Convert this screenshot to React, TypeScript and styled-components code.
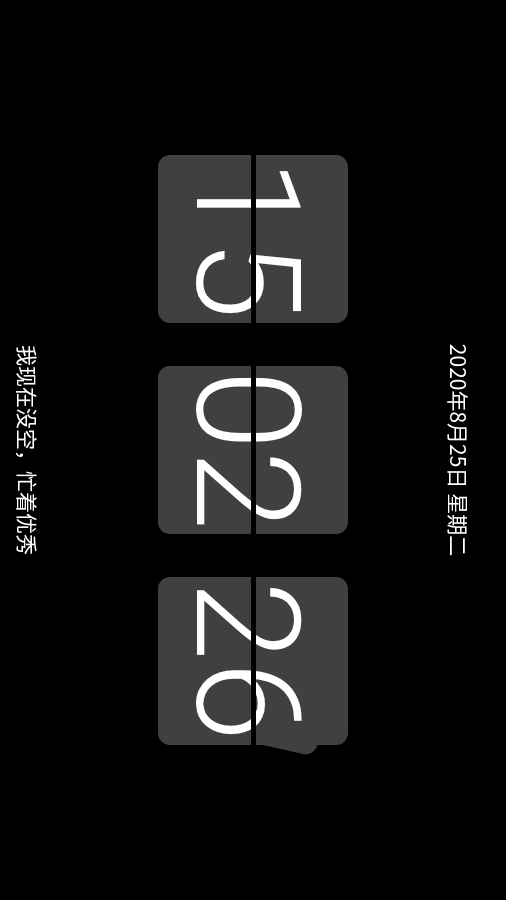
import React from "react";
import styled, { createGlobalStyle } from "styled-components";

const Global = createGlobalStyle`
  html, body {
    margin: 0;
    padding: 0;
    background: #000;
    overflow: hidden;
  }
  #root {
    width: 506px;
    height: 900px;
  }
`;

const Stage = styled.div`
  position: fixed;
  top: 0;
  left: 0;
  width: 900px;
  height: 506px;
  transform-origin: 0 0;
  transform: translateX(506px) rotate(90deg);
  background: #000;
  display: grid;
  grid-template-rows: 1fr auto 1fr;
  justify-items: center;
  color: #fff;
  font-family: "Noto Sans CJK SC", "Noto Sans", sans-serif;
`;

const Caption = styled.div<{ $pos: "top" | "bottom" }>`
  font-size: 21px;
  line-height: 1;
  white-space: pre;
  align-self: ${(p) => (p.$pos === "top" ? "start" : "end")};
  padding-top: ${(p) => (p.$pos === "top" ? "37px" : "0")};
  padding-bottom: ${(p) => (p.$pos === "bottom" ? "17px" : "0")};
`;

const Row = styled.div`
  display: flex;
  gap: 43px;
`;

const Card = styled.div`
  position: relative;
  width: 168px;
  height: 190px;
  box-sizing: border-box;
  padding-top: 29px;
  background: #404040;
  border-radius: 12px;
  font-family: Roboto, "Noto Sans", sans-serif;
  font-weight: 300;
  font-size: 145px;
  line-height: 145px;
  text-align: center;
  color: #fff;
`;

const Split = styled.div`
  position: absolute;
  left: 0;
  right: 0;
  top: 92px;
  height: 5px;
  background: #000;
`;

const Flap = styled.svg`
  position: absolute;
  left: 0;
  top: 0;
  width: 190px;
  height: 190px;
  overflow: visible;
  pointer-events: none;
`;

const FlipCard: React.FC<{ value: string; flipping?: boolean }> = ({ value, flipping }) => (
  <Card>
    {value}
    {flipping && (
      <Flap viewBox="0 0 190 190">
        <path d="M 166 94 L 177 45 Q 179 35 167 30 L 165 30 Z" fill="#404040" />
      </Flap>
    )}
    <Split />
  </Card>
);

export default function App() {
  return (
    <>
      <Global />
      <Stage>
        <Caption $pos="top">2020年8月25日 星期二</Caption>
        <Row>
          <FlipCard value="15" />
          <FlipCard value="02" />
          <FlipCard value="26" flipping />
        </Row>
        <Caption $pos="bottom">我现在没空，忙着优秀</Caption>
      </Stage>
    </>
  );
}
